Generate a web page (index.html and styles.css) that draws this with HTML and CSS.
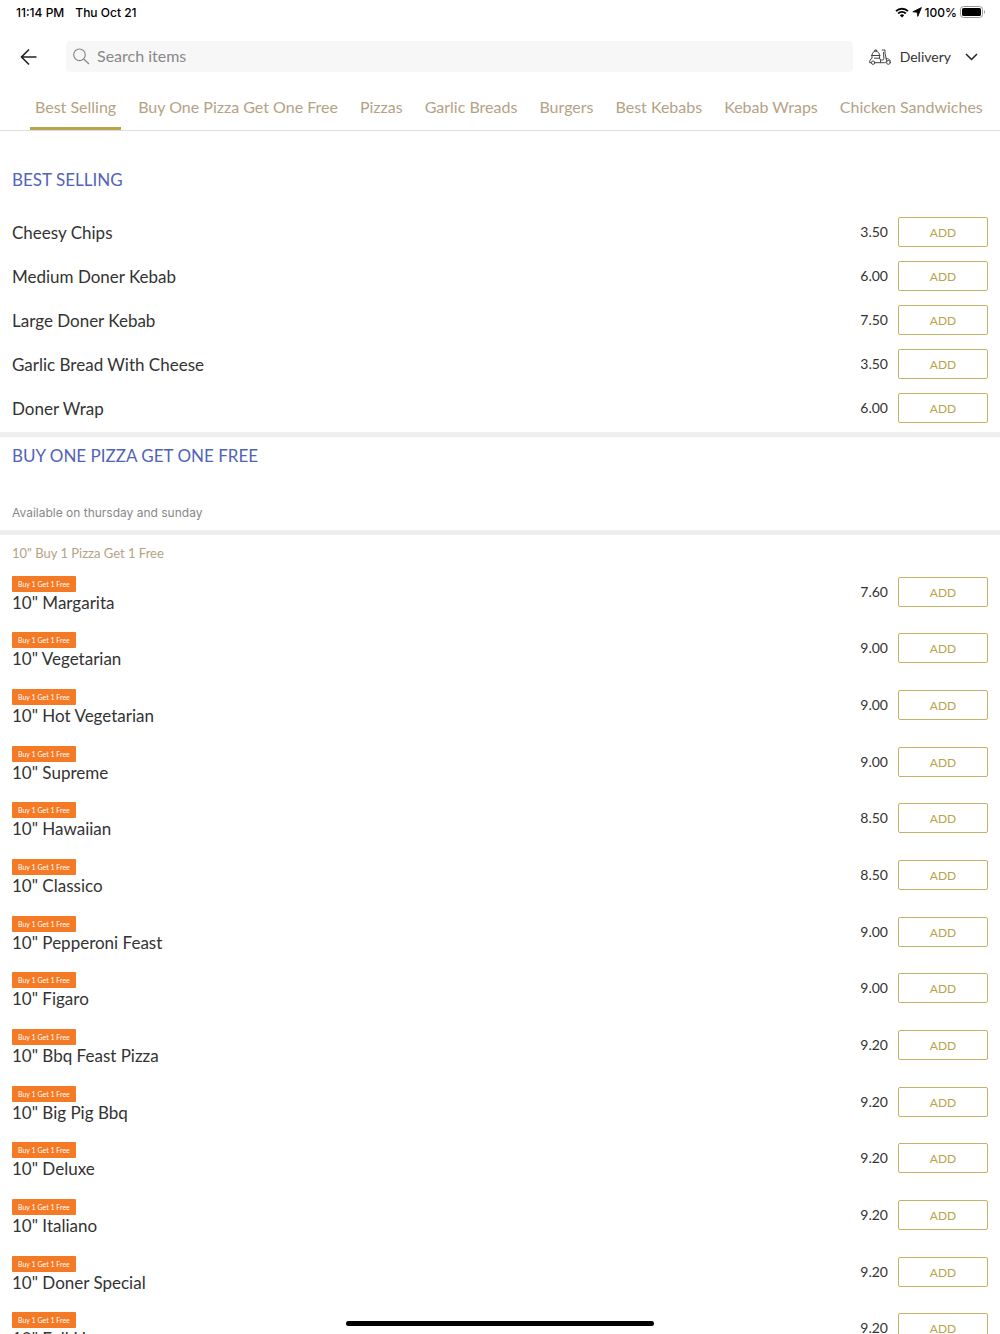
FILE: index.html
```html
<!DOCTYPE html>
<html lang="en">
<head>
    <meta charset="UTF-8">
    <meta name="viewport" content="width=device-width, initial-scale=1.0">
    <title>Menu</title>
    <link rel="stylesheet" href="styles.css">
</head>
<body>
    <!-- Status bar -->
    <div class="status-bar">
        <span class="time">11:14 PM</span>
        <span>Thu Oct 21</span>
        <div class="status-icons">
            <svg width="14" height="11" viewBox="0 0 14 11">
                <path d="M1 4.2a8.6 8.6 0 0 1 12 0M3.2 6.5a5.4 5.4 0 0 1 7.6 0" fill="none" stroke="#000" stroke-width="1.8"/>
                <path d="M4.9 8.4a3 3 0 0 1 4.2 0L7 10.6z"/>
            </svg>
            <svg width="10" height="10" viewBox="0 0 10 10"><path d="M9.4.6 5.8 9.4 5.1 5.2.8 4.8z" stroke="#000" stroke-width=".8" stroke-linejoin="round"/></svg>
            <span>100%</span>
            <svg width="25" height="12" viewBox="0 0 25 12">
                <rect x=".5" y=".5" width="22" height="11" rx="3" fill="none" stroke="#999"/>
                <rect x="2" y="2" width="19" height="8" rx="1.6"/>
                <path d="M24 4v4c.6-.4 1-1.1 1-2s-.4-1.6-1-2z" fill="#999"/>
            </svg>
        </div>
    </div>

    <!-- Search and order type -->
    <header class="top-bar">
        <button class="back" aria-label="Back">
            <svg width="18" height="18" viewBox="0 0 18 18"><path d="M16.5 9H2M9 1.5 1.5 9 9 16.5" fill="none" stroke="#222" stroke-width="1.6"/></svg>
        </button>
        <div class="search">
            <label for="search" aria-label="Search items">
                <svg width="17" height="17" viewBox="0 0 17 17"><path d="M12.3 6.8a5.8 5.8 0 1 1-11.6 0 5.8 5.8 0 0 1 11.6 0zM10.7 11l5.3 5" fill="none" stroke="#888" stroke-width="1.2"/></svg>
            </label>
            <input type="text" id="search" placeholder="Search items">
        </div>
        <button class="order-type">
            <svg width="22" height="16" viewBox="0 0 22 16" fill="none" stroke="#444" stroke-linejoin="round" stroke-linecap="round">
                <path d="M2.5 6.5h8.5M3 6.5C3 3.8 4.5 2.3 6.7 2.3s3.8 1.5 3.8 4.2M5.8 2V1h1.9v1"/>
                <path d="M3 6.5v2.8C1.5 10 .6 11.5.6 13.7h1.6M10.6 6.5v2.7H5.5M6 13.7h5.5v-2c0-1-.4-1.9-1-2.5"/>
                <path d="M11.5 13.7h4.2c1.4 0 2.1-1.2 1.8-2.5L16 4.3V1h-2.8M14.5 3.5l.4 6.2c0 .8-.4 1.3-1 1.3h-2.5M17.2 9.5c2 0 3.7 1 4.2 2.5"/>
                <circle cx="4.1" cy="13.7" r="1.7"/>
                <circle cx="19.4" cy="13.4" r="1.9"/>
            </svg>
            <span>Delivery</span>
            <svg width="13" height="8" viewBox="0 0 13 8"><path d="M1 1l5.5 5.5L12 1" fill="none" stroke="#222" stroke-width="1.5"/></svg>
        </button>
    </header>

    <!-- Categories -->
    <nav class="tabs">
        <a href="#best-selling" class="active">Best Selling</a>
        <a href="#buy-one">Buy One Pizza Get One Free</a>
        <a href="#pizzas">Pizzas</a>
        <a href="#garlic-breads">Garlic Breads</a>
        <a href="#burgers">Burgers</a>
        <a href="#best-kebabs">Best Kebabs</a>
        <a href="#kebab-wraps">Kebab Wraps</a>
        <a href="#chicken-sandwiches">Chicken Sandwiches</a>
    </nav>

    <main>
        <section id="best-selling" class="first">
            <h2>BEST SELLING</h2>
            <ul class="items">
                <li><span class="name">Cheesy Chips</span><span class="price">3.50</span><button class="add">ADD</button></li>
                <li><span class="name">Medium Doner Kebab</span><span class="price">6.00</span><button class="add">ADD</button></li>
                <li><span class="name">Large Doner Kebab</span><span class="price">7.50</span><button class="add">ADD</button></li>
                <li><span class="name">Garlic Bread With Cheese</span><span class="price">3.50</span><button class="add">ADD</button></li>
                <li><span class="name">Doner Wrap</span><span class="price">6.00</span><button class="add">ADD</button></li>
            </ul>
        </section>

        <section id="buy-one">
            <h2>BUY ONE PIZZA GET ONE FREE</h2>
            <p class="note">Available on thursday and sunday</p>
        </section>

        <section>
            <h3>10" Buy 1 Pizza Get 1 Free</h3>
            <ul class="items offers">
                <li><div class="name"><span class="badge">Buy 1 Get 1 Free</span>10" Margarita</div><span class="price">7.60</span><button class="add">ADD</button></li>
                <li><div class="name"><span class="badge">Buy 1 Get 1 Free</span>10" Vegetarian</div><span class="price">9.00</span><button class="add">ADD</button></li>
                <li><div class="name"><span class="badge">Buy 1 Get 1 Free</span>10" Hot Vegetarian</div><span class="price">9.00</span><button class="add">ADD</button></li>
                <li><div class="name"><span class="badge">Buy 1 Get 1 Free</span>10" Supreme</div><span class="price">9.00</span><button class="add">ADD</button></li>
                <li><div class="name"><span class="badge">Buy 1 Get 1 Free</span>10" Hawaiian</div><span class="price">8.50</span><button class="add">ADD</button></li>
                <li><div class="name"><span class="badge">Buy 1 Get 1 Free</span>10" Classico</div><span class="price">8.50</span><button class="add">ADD</button></li>
                <li><div class="name"><span class="badge">Buy 1 Get 1 Free</span>10" Pepperoni Feast</div><span class="price">9.00</span><button class="add">ADD</button></li>
                <li><div class="name"><span class="badge">Buy 1 Get 1 Free</span>10" Figaro</div><span class="price">9.00</span><button class="add">ADD</button></li>
                <li><div class="name"><span class="badge">Buy 1 Get 1 Free</span>10" Bbq Feast Pizza</div><span class="price">9.20</span><button class="add">ADD</button></li>
                <li><div class="name"><span class="badge">Buy 1 Get 1 Free</span>10" Big Pig Bbq</div><span class="price">9.20</span><button class="add">ADD</button></li>
                <li><div class="name"><span class="badge">Buy 1 Get 1 Free</span>10" Deluxe</div><span class="price">9.20</span><button class="add">ADD</button></li>
                <li><div class="name"><span class="badge">Buy 1 Get 1 Free</span>10" Italiano</div><span class="price">9.20</span><button class="add">ADD</button></li>
                <li><div class="name"><span class="badge">Buy 1 Get 1 Free</span>10" Doner Special</div><span class="price">9.20</span><button class="add">ADD</button></li>
                <li><div class="name"><span class="badge">Buy 1 Get 1 Free</span>10" Full House</div><span class="price">9.20</span><button class="add">ADD</button></li>
            </ul>
        </section>
    </main>

    <div class="home-indicator"></div>
</body>
</html>
```
FILE: styles.css
```css
* {
    box-sizing: border-box;
}
body {
    margin: 0;
    height: 100vh;
    display: flex;
    flex-direction: column;
    background: #fff;
    color: #333;
    font-family: Lato, sans-serif;
}
button {
    padding: 0;
    border: none;
    background: none;
    font-family: inherit;
    color: inherit;
    cursor: pointer;
}
svg {
    display: block;
    flex-shrink: 0;
}

/* Status bar */
.status-bar {
    display: flex;
    align-items: center;
    gap: 11px;
    height: 24px;
    padding: 0 15px 0 16px;
    color: #000;
    font: 500 12px Inter, sans-serif;
}
.status-icons {
    display: flex;
    align-items: center;
    gap: 3px;
    margin-left: auto;
}

/* Search and order type */
.top-bar {
    display: flex;
    align-items: center;
    height: 65px;
    padding: 0 22px 0 20px;
}
.back {
    margin-right: 28px;
}
.search {
    display: flex;
    align-items: center;
    gap: 7px;
    flex: 1;
    height: 31px;
    padding: 0 7px;
    border-radius: 4px;
    background: #f7f7f7;
}
.search input {
    flex: 1;
    padding: 0 0 2px;
    border: none;
    outline: none;
    background: none;
    font-family: inherit;
    font-size: 16px;
}
.search input::placeholder {
    color: #888;
}
.order-type {
    display: flex;
    align-items: center;
    margin-left: 16px;
    font-size: 14px;
}
.order-type span {
    margin: 0 14px 0 9px;
}

/* Categories */
.tabs {
    display: flex;
    flex-shrink: 0;
    gap: 12px;
    height: 42px;
    padding: 0 9px 0 30px;
    border-bottom: 1px solid #ddd;
    overflow: hidden;
    white-space: nowrap;
}
.tabs a {
    padding: 0 5px;
    border-bottom: 3px solid transparent;
    color: #b5a284;
    font-size: 16px;
    line-height: 35px;
    text-decoration: none;
}
.tabs .active {
    border-color: #b9a44c;
}

/* Menu */
main {
    flex: 1;
    overflow-y: auto;
    scrollbar-width: none;
}
section + section {
    border-top: 5px solid #eee;
}
.first {
    padding: 30px 0 2px;
}
h2 {
    margin: 0;
    padding: 0 12px;
    color: #5263b8;
    font-size: 17px;
    font-weight: normal;
    line-height: 38px;
}
h3 {
    margin: 0;
    padding: 0 12px;
    color: #b5a284;
    font-size: 13px;
    font-weight: normal;
    line-height: 36px;
}
.note {
    margin: 0;
    padding: 28px 12px 7px;
    color: #888;
    font: 12px/20px Inter, sans-serif;
}
.items {
    display: grid;
    grid-auto-rows: 44px;
    margin: 0;
    padding: 0;
    list-style: none;
}
.first .items {
    margin-top: 11px;
}
.items li {
    display: flex;
    align-items: center;
    padding: 0 12px;
}
.name {
    flex: 1;
    font-size: 17px;
    line-height: 22px;
}
.first .name {
    padding-top: 2px;
}
.price {
    padding-bottom: 2px;
    margin-right: 10px;
    font-size: 14px;
}
.add {
    width: 90px;
    height: 30px;
    border: 1px solid #c4b366;
    border-radius: 2px;
    color: #b9a44c;
    font-size: 12px;
}
/* rows average out at 56 and two thirds */
.offers {
    grid-auto-rows: 56px 57px 57px;
    margin-top: 5px;
}
.offers li {
    align-items: flex-start;
}
.offers .add {
    margin-top: 1px;
}
.offers .price {
    line-height: 32px;
}
.badge {
    display: block;
    width: max-content;
    padding: 0 6px;
    border-radius: 1px;
    background: #f57a26;
    color: #fff;
    font-size: 7px;
    line-height: 16px;
}

.home-indicator {
    position: fixed;
    bottom: 8px;
    left: 50%;
    width: 308px;
    height: 5px;
    margin-left: -154px;
    border-radius: 3px;
    background: #000;
}
```
